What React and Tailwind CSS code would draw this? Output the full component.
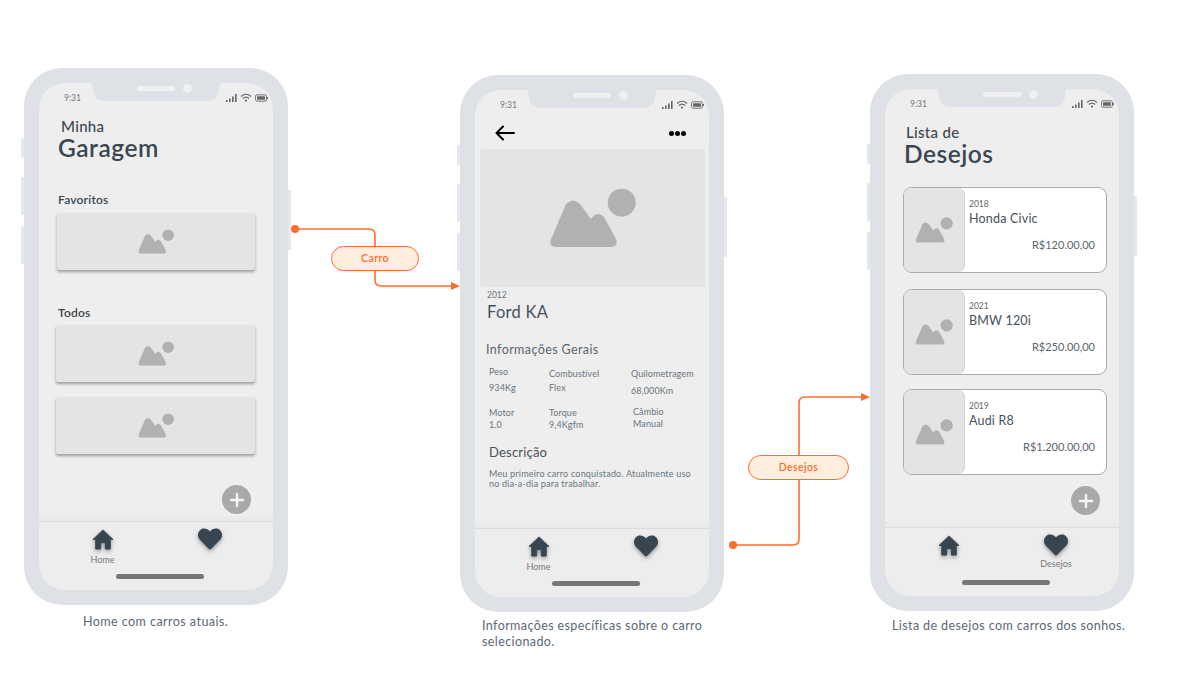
import React from "react";
import { FaHeart } from "react-icons/fa";

const FONT = "font-['Lato','Open_Sans',sans-serif]";

function Placeholder({ className }) {
  return (
    <svg viewBox="0 0 87 60" className={className} fill="#b1b1b1">
      <path d="M17 16 Q24 9 31 16 L42 31 Q48 22 55 29 L66 49 Q71 59 61 59 L8 59 Q-2 59 3 49 Z" />
      <circle cx="72.7" cy="14.7" r="14" />
    </svg>
  );
}

function HomeIcon() {
  return (
    <svg viewBox="0 0 24 23" className="w-[22px] h-[21px] drop-shadow-[0_2px_2px_rgba(0,0,0,0.35)]" fill="#36454f" stroke="#36454f" strokeWidth="1" strokeLinejoin="round">
      <path d="M12 1 L1 11.5 H4 V22 H9.5 V15 H14.5 V22 H20 V11.5 H23 Z" />
    </svg>
  );
}

function StatusIcons() {
  return (
    <svg viewBox="0 0 42 10" className="w-[42px] h-[10px]" fill="#666">
      <rect x="0" y="7" width="1.6" height="2" />
      <rect x="3" y="5.5" width="1.6" height="3.5" />
      <rect x="6" y="3.5" width="1.6" height="5.5" />
      <rect x="9" y="1" width="1.6" height="8" />
      <path d="M15 3.5 Q20 -1 25 3.5 M16.8 5.5 Q20 2.7 23.2 5.5" fill="none" stroke="#666" strokeWidth="1.1" />
      <circle cx="20" cy="7.6" r="1.1" />
      <rect x="29.5" y="1.8" width="11" height="6.4" rx="1.6" fill="none" stroke="#666" strokeWidth="0.9" />
      <rect x="31" y="3.2" width="8" height="3.6" rx="0.6" />
      <rect x="41" y="4" width="1" height="2" />
    </svg>
  );
}

function Phone({ className, plus, activeHome, activeHeart, children }) {
  return (
    <div className={`absolute w-[264px] h-[537px] rounded-[38px] bg-[#dee1e6] p-[15px] ${className}`}>
      <div className="absolute left-[-3px] top-[70px] w-[3px] h-[20px] bg-[#e6e8ec] rounded-l-[1px]" />
      <div className="absolute left-[-3px] top-[109px] w-[3px] h-[38px] bg-[#e6e8ec] rounded-l-[1px]" />
      <div className="absolute left-[-3px] top-[158px] w-[3px] h-[38px] bg-[#e6e8ec] rounded-l-[1px]" />
      <div className="absolute right-[-3px] top-[122px] w-[3px] h-[60px] bg-[#e6e8ec] rounded-r-[1px]" />
      <div className="relative w-[234px] h-[507px] rounded-[26px] bg-[#eeeeee] overflow-hidden flex flex-col">
        <svg viewBox="0 0 132 18" className="absolute left-[51px] top-0 w-[132px] h-[18px]" fill="#dee1e6">
          <path d="M0 0 Q2 0 2.5 4 Q3.5 18 15 18 H117 Q128.5 18 129.5 4 Q130 0 132 0 Z" />
        </svg>
        <div className="absolute left-[98px] top-[3px] w-[38px] h-[4.5px] rounded-full bg-[#f0f0f0]" />
        <div className="absolute left-[144px] top-[0.5px] w-[9px] h-[9px] rounded-full bg-[#f0f0f0]" />
        <div className="h-[28px] shrink-0 flex items-center justify-between pl-[25px] pr-[5px] pt-[1px]">
          <span className="text-[8.5px] leading-[10px] text-[#777777]">9:31</span>
          <StatusIcons />
        </div>
        <div className="flex-1 min-h-0">{children}</div>
        {plus && (
          <div className={`absolute w-[29px] h-[29px] rounded-full bg-[#a9a9a9] flex items-center justify-center ${plus}`}>
            <svg viewBox="0 0 16 16" className="w-[16px] h-[16px]" stroke="#f4f4f4" strokeWidth="2.4" strokeLinecap="round">
              <path d="M8 2 V14 M2 8 H14" />
            </svg>
          </div>
        )}
        <div className="h-[5px] shrink-0 bg-[#ebebeb]" />
        <div className="h-[69px] shrink-0 border-t border-[#dcdcdc] bg-[#ededed] flex flex-col">
          <div className="h-[52px] shrink-0 grid grid-cols-[127px_88px] pt-[7px]">
            <div className="flex flex-col items-center">
              <HomeIcon />
              {activeHome && <span className="mt-[5px] text-[9px] leading-[10px] text-[#777777]">Home</span>}
            </div>
            <div className="flex flex-col items-center">
              <FaHeart className="w-[24px] h-[24px] -mt-[2px] text-[#36454f] drop-shadow-[0_2px_2px_rgba(0,0,0,0.35)]" />
              {activeHeart && <span className="mt-[2px] text-[9px] leading-[10px] text-[#777777]">{activeHeart}</span>}
            </div>
          </div>
          <div className="ml-[77px] w-[88px] h-[5px] rounded-full bg-[#777777]" />
        </div>
      </div>
    </div>
  );
}

function GarageCard({ className }) {
  return (
    <div className={`h-[57px] bg-[#e4e4e4] rounded-[2px] shadow-[0_2px_3px_rgba(0,0,0,0.35)] flex items-center justify-center ${className}`}>
      <Placeholder className="w-[36px] h-[25px]" />
    </div>
  );
}

function WishCard({ year, name, price, className }) {
  return (
    <div className={`ml-[18px] w-[204px] h-[86px] rounded-[9px] border border-[#ababab] bg-white flex overflow-hidden ${className}`}>
      <div className="w-[61px] shrink-0 bg-[#e4e4e4] rounded-r-[7px] border-r border-[#d2d2d2] flex items-center justify-center">
        <Placeholder className="w-[38px] h-[26px]" />
      </div>
      <div className="flex-1 pl-[4px] pr-[11px] pt-[11px]">
        <div className="text-[8.5px] leading-[10px] text-[#666666]">{year}</div>
        <div className="mt-[2px] text-[12.5px] leading-[16px] text-[#46525b] tracking-[0.2px]">{name}</div>
        <div className="mt-[10px] text-right text-[11px] leading-[16px] text-[#5a656d]">{price}</div>
      </div>
    </div>
  );
}

function Spec({ label, value, className, gap }) {
  return (
    <div className={className}>
      <div className="text-[9px] leading-[10px] tracking-[0.1px] text-[#6a747c]">{label}</div>
      <div className={`text-[9px] leading-[10px] tracking-[0.1px] text-[#6a747c] ${gap}`}>{value}</div>
    </div>
  );
}

function Connectors() {
  return (
    <svg className="absolute inset-0 w-[1177px] h-[678px]" viewBox="0 0 1177 678" fill="none">
      <g stroke="#ff6d2d" strokeWidth="1.6">
        <path d="M295 229 H369 Q375 229 375 235 V280 Q375 286 381 286 H452" />
        <path d="M733 545 H793 Q799 545 799 539 V403 Q799 397 805 397 H862" />
      </g>
      <g fill="#ff6d2d">
        <circle cx="295" cy="229" r="4" />
        <circle cx="733" cy="545" r="4" />
        <path d="M451 282 L460 286 L451 290 Z" />
        <path d="M861 393 L870 397 L861 401 Z" />
      </g>
    </svg>
  );
}

function Pill({ className, children }) {
  return (
    <div className={`absolute h-[25px] rounded-full border-[1.5px] border-[#ff6d2d] bg-[#ffeedd] text-[#ff6d2d] text-[10.5px] tracking-[0.4px] font-semibold flex items-center justify-center ${className}`}>
      {children}
    </div>
  );
}

export default function App() {
  return (
    <div className={`relative w-[1177px] h-[678px] bg-white overflow-hidden ${FONT}`}>
      <Connectors />
      <Pill className="left-[331px] top-[246px] w-[88px]">Carro</Pill>
      <Pill className="left-[748px] top-[455px] w-[101px]">Desejos</Pill>

      <Phone className="left-[24px] top-[68px]" plus="left-[183px] top-[402px]" activeHome>
        <div className="pl-[19px] pt-[6px] text-[#3a4750]">
          <div className="ml-[3px] text-[15px] leading-[18px] font-medium tracking-[0.3px]">Minha</div>
          <div className="-mt-[1px] text-[24.5px] leading-[28px] font-semibold tracking-[0.5px]">Garagem</div>
          <div className="mt-[30px] text-[12px] leading-[16px] font-semibold tracking-[0.2px]">Favoritos</div>
        </div>
        <GarageCard className="mt-[5px] ml-[18px] w-[198px]" />
        <div className="mt-[35px] ml-[19px] text-[12px] leading-[16px] font-semibold tracking-[0.2px] text-[#3a4750]">Todos</div>
        <GarageCard className="mt-[4px] ml-[17px] w-[199px]" />
        <GarageCard className="mt-[15px] ml-[17px] w-[199px]" />
      </Phone>

      <Phone className="left-[460px] top-[75px]" activeHome>
        <div className="mt-[5px] flex items-center justify-between h-[20px] pl-[20px] pr-[23px]">
          <svg viewBox="0 0 20 16" className="w-[20px] h-[16px]" fill="none" stroke="#000" strokeWidth="2" strokeLinecap="round" strokeLinejoin="round">
            <path d="M1.5 8 H19 M8 1.5 L1.5 8 L8 14.5" />
          </svg>
          <div className="flex gap-[1px]">
            <span className="w-[5px] h-[5px] rounded-full bg-black" />
            <span className="w-[5px] h-[5px] rounded-full bg-black" />
            <span className="w-[5px] h-[5px] rounded-full bg-black" />
          </div>
        </div>
        <div className="mt-[6px] ml-[5px] w-[225px] h-[138px] bg-[#e4e4e4] rounded-[2px] flex items-center justify-center">
          <Placeholder className="w-[87px] h-[60px]" />
        </div>
        <div className="mt-[3px] pl-[12px] text-[8.5px] leading-[10px] text-[#6a747c]">2012</div>
        <div className="mt-[2px] pl-[12px] text-[16.5px] leading-[20px] text-[#46525b] tracking-[0.3px]">Ford KA</div>
        <div className="mt-[20px] pl-[11px] text-[12.5px] leading-[16px] text-[#5a656d] tracking-[0.4px]">Informações Gerais</div>
        <div className="ml-[14px] mt-[9px] grid grid-cols-[60px_82px_1fr]">
          <Spec label="Peso" value="934Kg" gap="mt-[6px]" />
          <Spec label="Combustível" value="Flex" className="mt-[2px]" gap="mt-[4px]" />
          <Spec label="Quilometragem" value="68,000Km" className="mt-[2px]" gap="mt-[7px]" />
        </div>
        <div className="ml-[14px] mt-[11px] grid grid-cols-[60px_82px_1fr]">
          <Spec label="Motor" value="1.0" className="mt-[1px]" gap="mt-[2px]" />
          <Spec label="Torque" value="9,4Kgfm" className="mt-[1px]" gap="mt-[2px]" />
          <Spec label="Câmbio" value="Manual" className="ml-[2px]" gap="mt-[2px]" />
        </div>
        <div className="ml-[14px] mt-[14px] text-[13px] leading-[16px] text-[#46525b] tracking-[0.2px]">Descrição</div>
        <p className="ml-[14px] mt-[9px] w-[205px] text-[9px] leading-[10px] tracking-[0.2px] text-[#6a747c]">
          Meu primeiro carro conquistado. Atualmente uso no dia-a-dia para trabalhar.
        </p>
      </Phone>

      <Phone className="left-[870px] top-[74px]" plus="left-[186px] top-[397px]" activeHeart="Desejos">
        <div className="pl-[19px] pt-[6px] text-[#3a4750]">
          <div className="ml-[2px] text-[15px] leading-[18px] font-medium tracking-[0.3px]">Lista de</div>
          <div className="-mt-[1px] text-[24.5px] leading-[28px] font-semibold tracking-[0.5px]">Desejos</div>
        </div>
        <WishCard className="mt-[19px]" year="2018" name="Honda Civic" price="R$120.00,00" />
        <WishCard className="mt-[16px]" year="2021" name="BMW 120i" price="R$250.00,00" />
        <WishCard className="mt-[14px]" year="2019" name="Audi R8" price="R$1.200.00,00" />
      </Phone>

      <p className="absolute left-[83px] top-[614px] text-[12.5px] leading-[16px] text-[#5a6874] tracking-[0.45px]">Home com carros atuais.</p>
      <p className="absolute left-[482px] top-[618px] w-[240px] text-[12.5px] leading-[16px] text-[#5a6874] tracking-[0.4px]">Informações específicas sobre o carro selecionado.</p>
      <p className="absolute left-[892px] top-[618px] text-[12.5px] leading-[16px] text-[#5a6874] tracking-[0.4px]">Lista de desejos com carros dos sonhos.</p>
    </div>
  );
}
